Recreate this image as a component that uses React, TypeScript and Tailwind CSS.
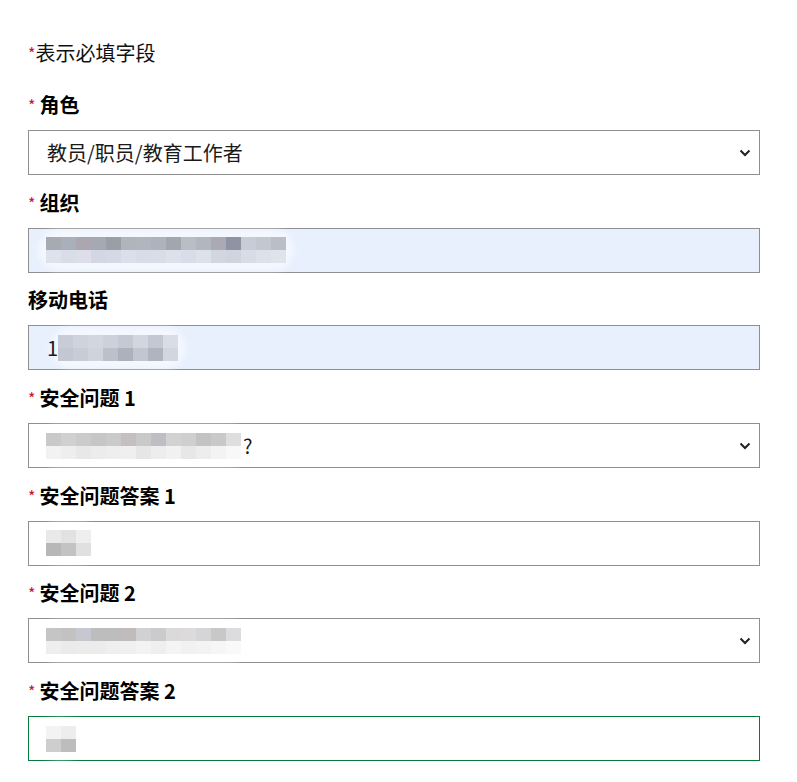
import React from 'react';

const font = { fontFamily: '"Noto Sans CJK SC", "Noto Sans", sans-serif' };

function Mosaic({ rows, cell = 15 }: { rows: string[][]; cell?: number }) {
  return (
    <div className="relative inline-flex flex-col">
      <div className="absolute -inset-x-2 -inset-y-2 rounded-full bg-white/50 blur-[3px]" />
      {rows.map((r, i) => (
        <div key={i} className="relative flex">
          {r.map((c, j) => (
            <div key={j} style={{ background: c, width: cell, height: cell - 2 }} />
          ))}
        </div>
      ))}
    </div>
  );
}

function Label({ text, req = true }: { text: string; req?: boolean }) {
  return (
    <div className="flex h-6 items-center text-[20px] font-bold text-black">
      {req && <span className="mr-[4px] text-[16px] font-normal text-[#c8102e]">*</span>}
      {text}
    </div>
  );
}

function Chevron() {
  return (
    <svg className="absolute right-[8px] top-1/2 -translate-y-1/2" width="12" height="8" viewBox="0 0 12 8">
      <path d="M1.5 1.5 6 6l4.5-4.5" fill="none" stroke="#222" strokeWidth="2" />
    </svg>
  );
}

function Box({
  children,
  select,
  fill,
  green,
}: {
  children?: React.ReactNode;
  select?: boolean;
  fill?: boolean;
  green?: boolean;
}) {
  return (
    <div
      className={`relative mt-[13px] flex h-[45px] w-[732px] items-center border pl-[17px] text-[20px] text-[#1a1a1a] ${
        green ? 'border-[#077a3b]' : 'border-[#8f8f8f]'
      } ${fill ? 'bg-[#e8f0fe]' : 'bg-white'}`}
    >
      {children}
      {select && <Chevron />}
    </div>
  );
}

export default function App() {
  return (
    <div className="min-h-screen bg-white pl-[28px] pt-[41px]" style={font}>
      <div className="flex h-6 items-center text-[20px] text-[#111]">
        <span className="text-[16px] text-[#c8102e]">*</span>表示必填字段
      </div>

      <div className="mt-[28px] flex flex-col gap-[15.7px]">
        <div>
          <Label text="角色" />
          <Box select>
            <span className="pl-[1px]">教员/职员/教育工作者</span>
          </Box>
        </div>

        <div>
          <Label text="组织" />
          <Box fill>
            <Mosaic
              rows={[
                ['#a8aab2', '#aab0bb', '#aba6b0', '#a5a9b3', '#9a9ea6', '#b0b4bb', '#b1b5bd', '#aeb2bc', '#a3a6ae', '#b9bdc6', '#b2b6bf', '#aba9b4', '#8e94a3', '#c8ccd5', '#c3c7cf', '#babec8'],
                ['#dde2ec', '#d9dde8', '#dcdfe9', '#d3d7e3', '#d3d9e5', '#dadfe9', '#d8dce8', '#d9dde8', '#dde1ec', '#d9dde9', '#dde1ea', '#d2d6e1', '#cfd4df', '#d8dce6', '#dde1ea', '#dfe3ec'],
              ]}
            />
          </Box>
        </div>

        <div>
          <Label text="移动电话" req={false} />
          <Box fill>
            <span className="relative z-10 pl-[1px]">1</span>
            <Mosaic
              rows={[
                ['#c7ccd6', '#cfd3dc', '#d2d6df', '#cdd1da', '#c5c9d3', '#d2d6df', '#c4c8d2', '#d9dde6'],
                ['#c3c7d1', '#c8ccd6', '#cfd3dc', '#bbc0ca', '#adb1bb', '#c1c6d0', '#b0b4be', '#d2d6df'],
              ]}
            />
          </Box>
        </div>

        <div>
          <Label text="安全问题 1" />
          <Box select>
            <Mosaic
              rows={[
                ['#c9c9ca', '#d0d0d1', '#cbcbcc', '#c6c6c6', '#cacaca', '#c5c0bf', '#c9c9ca', '#bfbec3', '#d2d2d3', '#cfcfd0', '#c3c3c4', '#c9c9ca', '#dedede'],
                ['#f2f2f2', '#eeeeee', '#e8e8e8', '#ececec', '#eeeeee', '#efefef', '#e6e6e6', '#ededed', '#f1f1f1', '#e7e7e7', '#ededed', '#f3f3f3', '#f8f8f8'],
              ]}
            />
            <span className="relative z-10 ml-[2px]">?</span>
          </Box>
        </div>

        <div>
          <Label text="安全问题答案 1" />
          <Box>
            <Mosaic
              rows={[
                ['#e9e9e9', '#e2e2e2', '#eeeeee'],
                ['#b7b7b7', '#c3c3c3', '#e0e0e0'],
              ]}
            />
          </Box>
        </div>

        <div>
          <Label text="安全问题 2" />
          <Box select>
            <Mosaic
              rows={[
                ['#c6c5c5', '#c3c2c2', '#c5c8ce', '#bdbdbd', '#bdbdbd', '#c0bcbc', '#d1d1d3', '#cbcbcd', '#dadada', '#dcdadb', '#d5d5d7', '#c8c8c8', '#dcdcde'],
                ['#eeeeee', '#ebebeb', '#ececec', '#ececec', '#efefef', '#f0f0f0', '#f3f3f3', '#efefef', '#f4f4f4', '#f1f1f1', '#f3f3f3', '#f6f6f6', '#f9f9f9'],
              ]}
            />
          </Box>
        </div>

        <div>
          <Label text="安全问题答案 2" />
          <Box green>
            <Mosaic
              rows={[
                ['#f3f3f3', '#ededed'],
                ['#cecece', '#bdbdbd'],
              ]}
            />
          </Box>
        </div>
      </div>
    </div>
  );
}
